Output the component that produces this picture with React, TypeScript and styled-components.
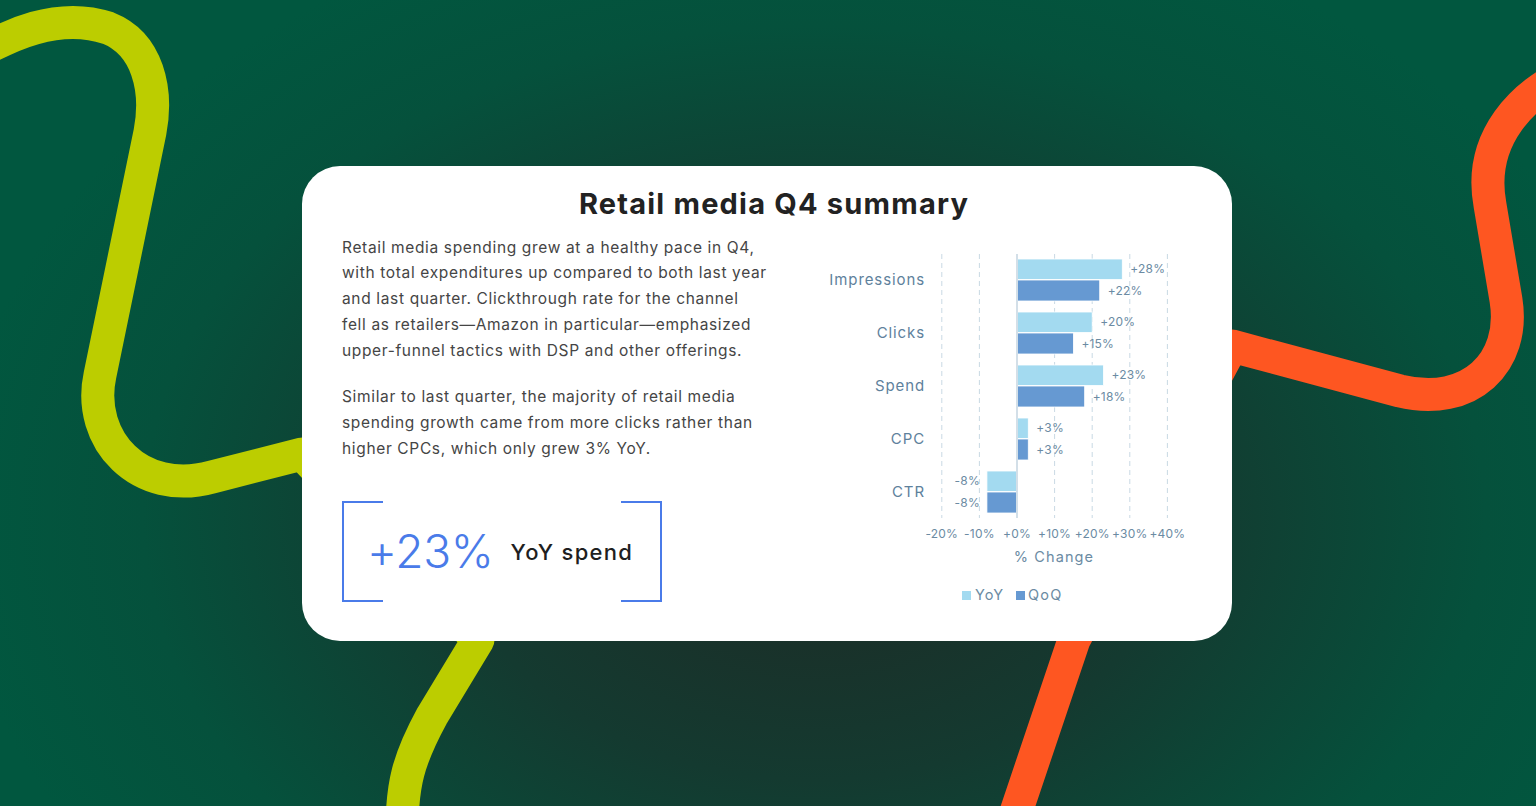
import React from "react";
import styled, { createGlobalStyle } from "styled-components";

const GlobalStyle = createGlobalStyle`
  html, body { margin: 0; padding: 0; }
  body { font-family: "Inter", "Open Sans", sans-serif; }
  * { box-sizing: border-box; }
`;

const Page = styled.div`
  position: relative;
  width: 100%;
  height: 806px;
  overflow: hidden;
  display: flex;
  align-items: center;
  justify-content: center;
  background: radial-gradient(ellipse 56% 78% at 53% 64%, #1e2a25 0%, #143a30 42%, #05513c 78%, #01573f 100%);
`;

const Ribbons = styled.svg`
  position: absolute;
  inset: 0;
  width: 100%;
  height: 100%;
  pointer-events: none;
`;

const Card = styled.section`
  position: relative;
  z-index: 1;
  width: 930px;
  height: 475px;
  margin-left: -2px;
  background: #ffffff;
  border-radius: 38px;
  padding: 20px 40px 0;
  display: flex;
  flex-direction: column;
`;

const Title = styled.h2`
  margin: 0;
  padding-left: 14px;
  text-align: center;
  font-family: "Inter", sans-serif;
  font-weight: 650;
  font-size: 29px;
  line-height: 36px;
  color: #222222;
  letter-spacing: 1.2px;
`;

const Body = styled.div`
  display: flex;
  margin-top: 13px;
`;

const TextColumn = styled.div`
  width: 468px;
  flex: none;
`;

const Paragraph = styled.p`
  margin: 0 0 21px;
  font-family: "Inter", sans-serif;
  font-size: 15.5px;
  line-height: 25.8px;
  color: #454545;
  white-space: nowrap;
  letter-spacing: 0.65px;
`;

const StatBox = styled.div`
  position: relative;
  width: 320px;
  height: 101px;
  margin-top: 39px;
  display: flex;
  align-items: center;
  padding-left: 25px;
  gap: 17px;

  &::before,
  &::after {
    content: "";
    position: absolute;
    top: 0;
    bottom: 0;
    width: 39px;
    border: 2px solid #4a7be9;
  }
  &::before {
    left: 0;
    border-right: none;
  }
  &::after {
    right: 0;
    border-left: none;
  }
`;

const StatValue = styled.span`
  font-family: "Inter", sans-serif;
  font-weight: 300;
  font-size: 46px;
  line-height: 1;
  color: #4a7be9;
  letter-spacing: -0.3px;
`;

const StatLabel = styled.span`
  font-family: "Inter", sans-serif;
  font-weight: 500;
  font-size: 22px;
  color: #1f1f1f;
  padding-top: 2px;
  letter-spacing: 1.3px;
`;

const ChartSvg = styled.svg`
  flex: none;
  display: block;
  font-family: "Inter", sans-serif;
`;

type Row = { label: string; yoy: number; qoq: number };

const rows: Row[] = [
  { label: "Impressions", yoy: 28, qoq: 22 },
  { label: "Clicks", yoy: 20, qoq: 15 },
  { label: "Spend", yoy: 23, qoq: 18 },
  { label: "CPC", yoy: 3, qoq: 3 },
  { label: "CTR", yoy: -8, qoq: -8 },
];

const ZERO = 207;
const UNIT = 3.76;
const ticks = [-20, -10, 0, 10, 20, 30, 40];
const fmt = (v: number) => (v < 0 ? `${v}%` : `+${v}%`);
const INK = "#6b8ba3";

const Bar: React.FC<{ y: number; h: number; v: number; fill: string }> = ({ y, h, v, fill }) => {
  const end = ZERO + v * UNIT;
  const x = Math.min(ZERO, end);
  const w = Math.abs(end - ZERO);
  const cy = y + h / 2 + 4;
  return (
    <g>
      <rect x={x} y={y} width={w} height={h} fill={fill} stroke="#ffffff" strokeWidth={0.8} />
      {v >= 0 ? (
        <text x={end + 8} y={cy} fontSize={12} fill={INK} letterSpacing={0.2}>
          {fmt(v)}
        </text>
      ) : (
        <text x={end - 7} y={cy} fontSize={12} fill={INK} textAnchor="end" letterSpacing={0.2}>
          {fmt(v)}
        </text>
      )}
    </g>
  );
};

const Chart: React.FC = () => (
  <ChartSvg width={400} height={380} viewBox="0 0 400 380">
    {ticks.map((t) => {
      const x = ZERO + t * UNIT;
      return t === 0 ? null : (
        <line key={t} x1={x} x2={x} y1={19} y2={283} stroke="#c9d9e4" strokeWidth={1} strokeDasharray="5 4" />
      );
    })}
    {rows.map((r, i) => {
      const top = 24 + 53 * i;
      return (
        <g key={r.label}>
          <text x={115} y={top + 26} fontSize={15} fill="#5e819c" textAnchor="end" letterSpacing={0.9}>
            {r.label}
          </text>
          <Bar y={top} h={20.5} v={r.yoy} fill="#a3daf0" />
          <Bar y={top + 21} h={21} v={r.qoq} fill="#6699d2" />
        </g>
      );
    })}
    <line x1={ZERO} x2={ZERO} y1={19} y2={283} stroke="#d3dfe8" strokeWidth={2} />
    {ticks.map((t) => (
      <text key={t} x={ZERO + t * UNIT} y={303} fontSize={12} fill={INK} textAnchor="middle" letterSpacing={0.2}>
        {fmt(t)}
      </text>
    ))}
    <text x={244} y={327} fontSize={14.5} fill={INK} textAnchor="middle" letterSpacing={1.1}>
      % Change
    </text>
    <rect x={152} y={356} width={9} height={9} fill="#a3daf0" />
    <text x={165} y={365} fontSize={14.5} fill={INK} letterSpacing={1}>
      YoY
    </text>
    <rect x={206} y={356} width={9} height={9} fill="#6699d2" />
    <text x={218} y={365} fontSize={14.5} fill={INK} letterSpacing={1.2}>
      QoQ
    </text>
  </ChartSvg>
);

export default function App() {
  return (
    <>
      <GlobalStyle />
      <Page>
        <Ribbons viewBox="0 0 1536 806" preserveAspectRatio="none">
          <path
            d="M -40 64 C 10 32, 60 12, 108 28 C 148 44, 158 90, 150 132 L 100 375 C 86 440, 140 497, 212 477 L 302 454 L 478 640 L 432 716 C 408 760, 402 785, 402 830"
            fill="none"
            stroke="#bccd00"
            strokeWidth={33}
            strokeLinejoin="round"
          />
          <path
            d="M 1580 68 C 1520 92, 1478 140, 1490 205 L 1506 300 C 1516 362, 1470 408, 1400 391 L 1232 346 L 1074 640 L 1010 830"
            fill="none"
            stroke="#fe5621"
            strokeWidth={33}
            strokeLinejoin="round"
          />
        </Ribbons>
        <Card>
          <Title>Retail media Q4 summary</Title>
          <Body>
            <TextColumn>
              <Paragraph>
                Retail media spending grew at a healthy pace in Q4,
                <br />
                with total expenditures up compared to both last year
                <br />
                and last quarter. Clickthrough rate for the channel
                <br />
                fell as retailers—Amazon in particular—emphasized
                <br />
                upper-funnel tactics with DSP and other offerings.
              </Paragraph>
              <Paragraph>
                Similar to last quarter, the majority of retail media
                <br />
                spending growth came from more clicks rather than
                <br />
                higher CPCs, which only grew 3% YoY.
              </Paragraph>
              <StatBox>
                <StatValue>+23%</StatValue>
                <StatLabel>YoY spend</StatLabel>
              </StatBox>
            </TextColumn>
            <Chart />
          </Body>
        </Card>
      </Page>
    </>
  );
}
